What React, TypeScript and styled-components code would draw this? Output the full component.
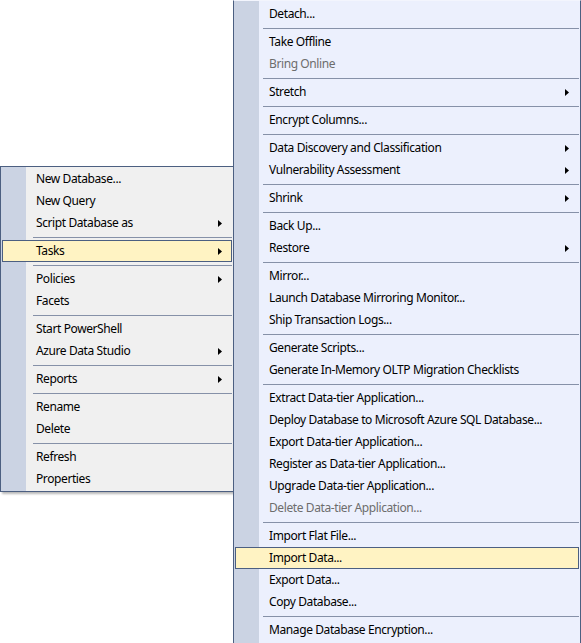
import React from "react";
import styled, { createGlobalStyle } from "styled-components";

const Global = createGlobalStyle`
  html, body { margin: 0; padding: 0; background: #ffffff; overflow: hidden; }
  body { font-family: "Noto Sans", "Open Sans", Arial, sans-serif; }
`;

const Stage = styled.div`
  display: flex;
  align-items: flex-start;
  width: 581px;
  height: 643px;
  overflow: hidden;
`;

const Menu = styled.div<{ $bg: string; $top: number; $width: number; $pad: number; $topBorder: string }>`
  box-sizing: border-box;
  width: ${(p) => p.$width}px;
  margin-top: ${(p) => p.$top}px;
  border: 1px solid #4c5f81;
  border-top-color: ${(p) => p.$topBorder};
  padding: ${(p) => p.$pad}px 0;
  background: linear-gradient(to right, #cbd3e3 0, #cbd3e3 25px, ${(p) => p.$bg} 25px);
  display: flex;
  flex-direction: column;
  font-size: 12px;
  color: #000;
  flex-shrink: 0;
`;

const LeftMenu = styled(Menu)`
  box-shadow: 2px 2px 2px rgba(0, 0, 0, 0.28);
  position: relative;
  z-index: 1;
`;

const RightMenu = styled(Menu)`
  margin-left: -1px;
  position: relative;
  z-index: 2;
`;

const Row = styled.div<{ $active?: boolean; $disabled?: boolean }>`
  box-sizing: border-box;
  height: 22px;
  margin: 0 1px;
  border: 1px solid ${(p) => (p.$active ? "#4c5f81" : "transparent")};
  background: ${(p) => (p.$active ? "#fff3c3" : "transparent")};
  color: ${(p) => (p.$disabled ? "#6d6d6d" : "#000")};
  padding: 0 9px 0 33px;
  display: flex;
  align-items: center;
  justify-content: space-between;
  line-height: 20px;
  white-space: nowrap;
`;

const Label = styled.span`
  letter-spacing: -0.4px;
`;

const Arrow = styled.svg`
  width: 4px;
  height: 7px;
  flex-shrink: 0;
`;

const Sep = styled.div<{ $indent: number }>`
  height: 6px;
  display: flex;
  align-items: center;
  padding: 0 1px 0 ${(p) => p.$indent}px;
  &::after {
    content: "";
    flex: 1;
    height: 1px;
    background: #8691a8;
  }
`;

type Item =
  | { sep: true }
  | { label: string; sub?: boolean; active?: boolean; disabled?: boolean };

const S: Item = { sep: true };

const leftItems: Item[] = [
  { label: "New Database..." },
  { label: "New Query" },
  { label: "Script Database as", sub: true },
  S,
  { label: "Tasks", sub: true, active: true },
  S,
  { label: "Policies", sub: true },
  { label: "Facets" },
  S,
  { label: "Start PowerShell" },
  { label: "Azure Data Studio", sub: true },
  S,
  { label: "Reports", sub: true },
  S,
  { label: "Rename" },
  { label: "Delete" },
  S,
  { label: "Refresh" },
  { label: "Properties" },
];

const rightItems: Item[] = [
  { label: "Detach..." },
  S,
  { label: "Take Offline" },
  { label: "Bring Online", disabled: true },
  S,
  { label: "Stretch", sub: true },
  S,
  { label: "Encrypt Columns..." },
  S,
  { label: "Data Discovery and Classification", sub: true },
  { label: "Vulnerability Assessment", sub: true },
  S,
  { label: "Shrink", sub: true },
  S,
  { label: "Back Up..." },
  { label: "Restore", sub: true },
  S,
  { label: "Mirror..." },
  { label: "Launch Database Mirroring Monitor..." },
  { label: "Ship Transaction Logs..." },
  S,
  { label: "Generate Scripts..." },
  { label: "Generate In-Memory OLTP Migration Checklists" },
  S,
  { label: "Extract Data-tier Application..." },
  { label: "Deploy Database to Microsoft Azure SQL Database..." },
  { label: "Export Data-tier Application..." },
  { label: "Register as Data-tier Application..." },
  { label: "Upgrade Data-tier Application..." },
  { label: "Delete Data-tier Application...", disabled: true },
  S,
  { label: "Import Flat File..." },
  { label: "Import Data...", active: true },
  { label: "Export Data..." },
  { label: "Copy Database..." },
  S,
  { label: "Manage Database Encryption..." },
];

const SubArrow = () => (
  <Arrow viewBox="0 0 4 7">
    <polygon points="0,0 4,3.5 0,7" fill="#000" />
  </Arrow>
);

const renderItems = (items: Item[], sepIndent: number) =>
  items.map((it, i) =>
    "sep" in it ? (
      <Sep key={i} $indent={sepIndent} />
    ) : (
      <Row key={i} $active={it.active} $disabled={it.disabled}>
        <Label>{it.label}</Label>
        {it.sub && <SubArrow />}
      </Row>
    )
  );

export default function App() {
  return (
    <>
      <Global />
      <Stage>
        <LeftMenu $bg="#f0f0f0" $top={166} $width={234} $pad={1} $topBorder="#4c5f81">
          {renderItems(leftItems, 32)}
        </LeftMenu>
        <RightMenu $bg="#ecf0fd" $top={0} $width={348} $pad={2} $topBorder="#f3f5fd">
          {renderItems(rightItems, 29)}
        </RightMenu>
      </Stage>
    </>
  );
}
